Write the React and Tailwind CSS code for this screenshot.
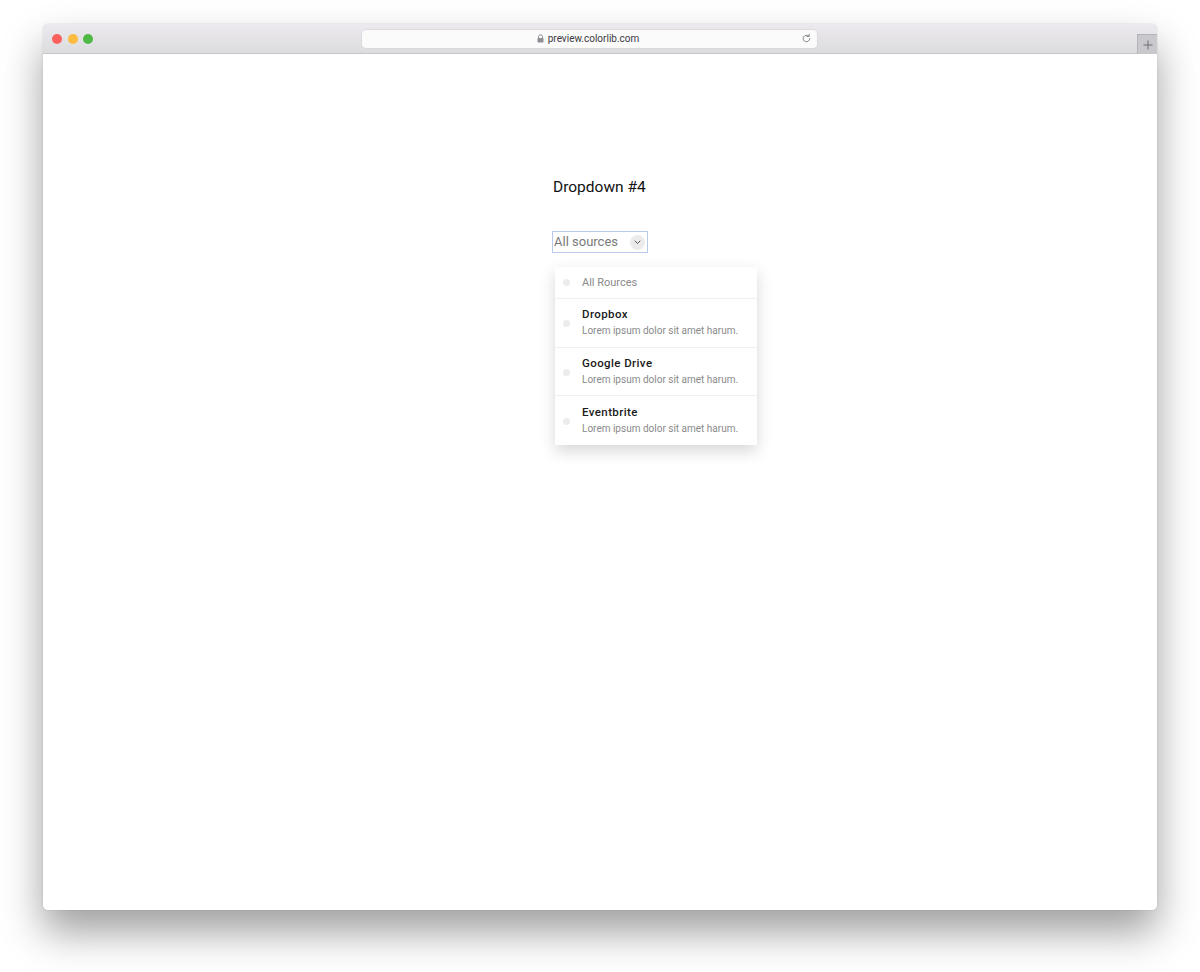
import React, { useState } from "react";

const sources = [
  { name: "Dropbox", desc: "Lorem ipsum dolor sit amet harum." },
  { name: "Google Drive", desc: "Lorem ipsum dolor sit amet harum." },
  { name: "Eventbrite", desc: "Lorem ipsum dolor sit amet harum." },
];

function TitleBar() {
  return (
    <div className="h-[30px] flex items-center bg-gradient-to-b from-[#eceaee] to-[#dcdbde] border-b border-[#c6c5c9] rounded-t-[5px] relative">
      {/* Traffic lights */}
      <div className="flex items-center gap-[5.5px] pl-[9px]">
        <span className="w-[10px] h-[10px] rounded-full bg-[#fc605c]" />
        <span className="w-[10px] h-[10px] rounded-full bg-[#fdbc40]" />
        <span className="w-[10px] h-[10px] rounded-full bg-[#4fb945]" />
      </div>

      {/* URL bar */}
      <div className="ml-[269px] w-[455px] h-[18px] rounded-[4px] bg-[#fbfbfc] shadow-[0_0_0_0.5px_#d3d2d6] flex items-center relative">
        <div className="flex-1 flex items-center justify-center gap-[4px] text-[10px] text-[#3a3a3c] pr-[3px]" style={{ fontFamily: "Roboto, 'Noto Sans', sans-serif" }}>
          <svg width="7" height="9" viewBox="0 0 7 9" className="-mt-[1px]">
            <path d="M1.5 4V2.8a2 2 0 0 1 4 0V4" fill="none" stroke="#8e8e93" strokeWidth="1" />
            <rect x="0.5" y="4" width="6" height="4.5" rx="0.8" fill="#8e8e93" />
          </svg>
          <span>preview.colorlib.com</span>
        </div>
        <svg width="11" height="11" viewBox="0 0 12 12" className="absolute right-[5px] top-[3.5px]">
          <path d="M9.6 6a3.6 3.6 0 1 1-1.1-2.6" fill="none" stroke="#7d7d82" strokeWidth="1" strokeLinecap="round" />
          <path d="M8.9 1.4v2.4H6.5" fill="none" stroke="#7d7d82" strokeWidth="1" strokeLinecap="round" strokeLinejoin="round" />
        </svg>
      </div>

      {/* New tab button */}
      <div className="absolute right-0 bottom-[-1px] w-[20px] h-[20px] bg-[#c9c8cc] border-l border-t border-[#b5b4b8] flex items-center justify-center">
        <svg width="10" height="10" viewBox="0 0 10 10">
          <path d="M5 0.5v9M0.5 5h9" stroke="#6f6e72" strokeWidth="1" />
        </svg>
      </div>
    </div>
  );
}

function Dropdown() {
  const [open] = useState(true);

  return (
    <div className="relative w-[96px]">
      <button className="w-[96px] h-[22px] flex items-center justify-between border border-[#b9c9ee] bg-white pl-[1px] pr-[2px] text-[13px] text-[#7a7a7a] leading-none">
        <span className="-mt-[1px]">All sources</span>
        <span className="w-[15px] h-[15px] rounded-full bg-[#ebebeb] flex items-center justify-center">
          <svg width="7" height="5" viewBox="0 0 7 5">
            <path d="M1 1l2.5 2.5L6 1" fill="none" stroke="#555" strokeWidth="1" strokeLinecap="round" strokeLinejoin="round" />
          </svg>
        </span>
      </button>

      {open && (
        <div className="absolute left-[3px] top-[36px] w-[202px] bg-white shadow-[0_6px_16px_rgba(0,0,0,0.16)] rounded-[2px] z-10">
          <div className="h-[32px] flex items-center border-b border-[#f0f0f0]">
            <span className="ml-[8px] w-[7px] h-[7px] rounded-full bg-[#ececec]" />
            <span className="ml-[12px] text-[11px] text-[#8a8a8a] mt-[2px]">All Rources</span>
          </div>
          {sources.map((s, i) => (
            <div
              key={s.name}
              className={`h-[48.5px] flex items-center ${i < sources.length - 1 ? "border-b border-[#f0f0f0]" : ""}`}
            >
              <span className="ml-[8px] w-[7px] h-[7px] rounded-full bg-[#ececec] mt-[2px]" />
              <div className="ml-[12px] flex flex-col">
                <span className="text-[11.5px] font-medium text-[#1a1a1a] tracking-[0.4px] leading-[16px]">{s.name}</span>
                <span className="text-[10px] text-[#8a8a8a] leading-[16px] mt-[1px]">{s.desc}</span>
              </div>
            </div>
          ))}
        </div>
      )}
    </div>
  );
}

export default function App() {
  return (
    <div className="w-[1200px] h-[972px] bg-white pt-[24px] px-[43px]" style={{ fontFamily: "Roboto, 'Noto Sans', sans-serif" }}>
      <div className="rounded-[5px] shadow-[0_22px_40px_rgba(0,0,0,0.38),0_0_1px_rgba(0,0,0,0.35)] bg-white">
        <TitleBar />
        <div className="h-[856px] bg-white rounded-b-[5px] flex flex-col items-center pt-[123px]">
          <div className="w-[96px]">
            <h2 className="ml-[1px] text-[15.5px] text-[#111] whitespace-nowrap leading-[20px]">Dropdown #4</h2>
            <div className="mt-[34px]">
              <Dropdown />
            </div>
          </div>
        </div>
      </div>
    </div>
  );
}
